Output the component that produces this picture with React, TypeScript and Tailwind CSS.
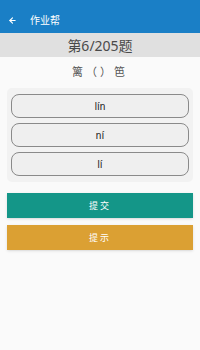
import { ArrowLeft } from 'lucide-react';

const options = ['lín', 'ní', 'lí'];

export default function App() {
  return (
    <div
      className="w-[200px] h-[350px] bg-[#fafafa] flex flex-col"
      style={{ fontFamily: '"Noto Sans", "Noto Sans CJK SC", sans-serif' }}
    >
      <div className="h-[33px] bg-[#1a7fc6] flex items-center pt-[8px] shadow-sm">
        <ArrowLeft className="ml-[8px] w-[9px] h-[9px] text-white" strokeWidth={3} />
        <span className="ml-[13px] text-[10px] text-white">作业帮</span>
      </div>
      <div className="h-[24px] bg-[#e0e0e0] flex items-center justify-center text-[14px] text-[#4a4a4a]">
        第6/205题
      </div>
      <div className="h-[31px] flex items-center justify-center text-[11px] text-[#555] tracking-[3px]">
        篱（）笆
      </div>
      <div className="mx-[7px] bg-[#f2f2f2] rounded-[5px] px-[4px] py-[6px] flex flex-col gap-[5px]">
        {options.map((o) => (
          <button
            key={o}
            className="h-[24px] rounded-[8px] border border-[#8a8a8a] bg-[#efefef] text-[10px] text-[#222]"
            style={{ fontFamily: '"Liberation Sans", sans-serif' }}
          >
            {o}
          </button>
        ))}
      </div>
      <button className="mx-[7px] mt-[11px] h-[25px] bg-[#149688] text-white text-[9px] tracking-[2px] shadow-sm">
        提交
      </button>
      <button className="mx-[7px] mt-[7px] h-[25px] bg-[#dba033] text-white text-[9px] tracking-[2px] shadow-sm">
        提示
      </button>
    </div>
  );
}
